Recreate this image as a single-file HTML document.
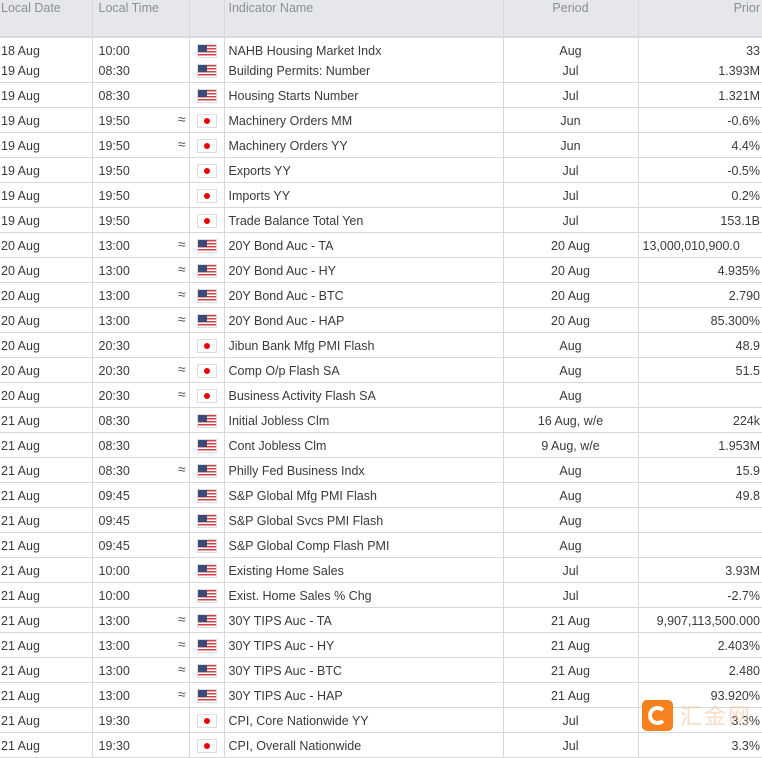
<!DOCTYPE html>
<html><head><meta charset="utf-8"><style>
*{margin:0;padding:0;box-sizing:border-box}
body{width:762px;height:755px;overflow:hidden;background:#fff;font-family:"Liberation Sans",Arial,sans-serif;font-size:12.5px;color:#3a3a3a;position:relative}
table{border-collapse:collapse;table-layout:fixed;width:762px;position:absolute;left:0;top:0}
th{background:#e5e7eb;color:#8a8e96;font-weight:normal;height:37px;vertical-align:top;padding-top:1px;text-align:left;border-left:1px solid #d6d8dc;border-bottom:2px solid #d6d8dc;font-size:12.5px}
td{height:25px;border-left:1px solid #d6d8dc;border-bottom:1px solid #d6d8dc;white-space:nowrap;overflow:hidden;padding-top:6px;vertical-align:top;line-height:14px}
th:first-child,td:first-child{border-left:none}
.c0{padding-left:1px}.c1{padding-left:6px;position:relative}.c3{padding-left:4px}.c4{text-align:center}.c5{text-align:right;padding-right:2px}
.ax{position:absolute;right:3px;top:4px;font-size:14px;color:#555}
.f{display:inline-block;width:20px;height:14px;border:1px solid #ddd;vertical-align:top;margin-left:7px;position:relative;background:#fff}
.us{background:repeating-linear-gradient(#c44 0 1.5px,#fff 1.5px 3px)}
.us::before{content:"";position:absolute;left:0;top:0;width:9px;height:7px;background:#3c4a78}
.jp::before{content:"";position:absolute;left:6px;top:3px;width:6px;height:6px;border-radius:50%;background:#e00}
tr.m td{height:22px;border-bottom:none;padding-top:6px}
tr.m2 td{height:23px;padding-top:5px}
</style></head><body>
<table>
<colgroup><col style="width:92px"><col style="width:97px"><col style="width:35px"><col style="width:279px"><col style="width:135px"><col style="width:124px"></colgroup>
<tr><th style="padding-left:1px">Local Date</th><th style="padding-left:6px">Local Time</th><th></th><th style="padding-left:4px">Indicator Name</th><th style="text-align:center">Period</th><th style="text-align:right;padding-right:2px">Prior</th></tr>
<tr class="m"><td class="c0">18 Aug</td><td class="c1">10:00</td><td><span class="f us"></span></td><td class="c3">NAHB Housing Market Indx</td><td class="c4">Aug</td><td class="c5">33</td></tr>
<tr class="m2"><td class="c0">19 Aug</td><td class="c1">08:30</td><td><span class="f us"></span></td><td class="c3">Building Permits: Number</td><td class="c4">Jul</td><td class="c5">1.393M</td></tr>
<tr><td class="c0">19 Aug</td><td class="c1">08:30</td><td><span class="f us"></span></td><td class="c3">Housing Starts Number</td><td class="c4">Jul</td><td class="c5">1.321M</td></tr>
<tr><td class="c0">19 Aug</td><td class="c1">19:50<span class="ax">≈</span></td><td><span class="f jp"></span></td><td class="c3">Machinery Orders MM</td><td class="c4">Jun</td><td class="c5">-0.6%</td></tr>
<tr><td class="c0">19 Aug</td><td class="c1">19:50<span class="ax">≈</span></td><td><span class="f jp"></span></td><td class="c3">Machinery Orders YY</td><td class="c4">Jun</td><td class="c5">4.4%</td></tr>
<tr><td class="c0">19 Aug</td><td class="c1">19:50</td><td><span class="f jp"></span></td><td class="c3">Exports YY</td><td class="c4">Jul</td><td class="c5">-0.5%</td></tr>
<tr><td class="c0">19 Aug</td><td class="c1">19:50</td><td><span class="f jp"></span></td><td class="c3">Imports YY</td><td class="c4">Jul</td><td class="c5">0.2%</td></tr>
<tr><td class="c0">19 Aug</td><td class="c1">19:50</td><td><span class="f jp"></span></td><td class="c3">Trade Balance Total Yen</td><td class="c4">Jul</td><td class="c5">153.1B</td></tr>
<tr><td class="c0">20 Aug</td><td class="c1">13:00<span class="ax">≈</span></td><td><span class="f us"></span></td><td class="c3">20Y Bond Auc - TA</td><td class="c4">20 Aug</td><td class="c5" style="text-align:left;padding-left:4px">13,000,010,900.0</td></tr>
<tr><td class="c0">20 Aug</td><td class="c1">13:00<span class="ax">≈</span></td><td><span class="f us"></span></td><td class="c3">20Y Bond Auc - HY</td><td class="c4">20 Aug</td><td class="c5">4.935%</td></tr>
<tr><td class="c0">20 Aug</td><td class="c1">13:00<span class="ax">≈</span></td><td><span class="f us"></span></td><td class="c3">20Y Bond Auc - BTC</td><td class="c4">20 Aug</td><td class="c5">2.790</td></tr>
<tr><td class="c0">20 Aug</td><td class="c1">13:00<span class="ax">≈</span></td><td><span class="f us"></span></td><td class="c3">20Y Bond Auc - HAP</td><td class="c4">20 Aug</td><td class="c5">85.300%</td></tr>
<tr><td class="c0">20 Aug</td><td class="c1">20:30</td><td><span class="f jp"></span></td><td class="c3">Jibun Bank Mfg PMI Flash</td><td class="c4">Aug</td><td class="c5">48.9</td></tr>
<tr><td class="c0">20 Aug</td><td class="c1">20:30<span class="ax">≈</span></td><td><span class="f jp"></span></td><td class="c3">Comp O/p Flash SA</td><td class="c4">Aug</td><td class="c5">51.5</td></tr>
<tr><td class="c0">20 Aug</td><td class="c1">20:30<span class="ax">≈</span></td><td><span class="f jp"></span></td><td class="c3">Business Activity Flash SA</td><td class="c4">Aug</td><td class="c5"></td></tr>
<tr><td class="c0">21 Aug</td><td class="c1">08:30</td><td><span class="f us"></span></td><td class="c3">Initial Jobless Clm</td><td class="c4">16 Aug, w/e</td><td class="c5">224k</td></tr>
<tr><td class="c0">21 Aug</td><td class="c1">08:30</td><td><span class="f us"></span></td><td class="c3">Cont Jobless Clm</td><td class="c4">9 Aug, w/e</td><td class="c5">1.953M</td></tr>
<tr><td class="c0">21 Aug</td><td class="c1">08:30<span class="ax">≈</span></td><td><span class="f us"></span></td><td class="c3">Philly Fed Business Indx</td><td class="c4">Aug</td><td class="c5">15.9</td></tr>
<tr><td class="c0">21 Aug</td><td class="c1">09:45</td><td><span class="f us"></span></td><td class="c3">S&amp;P Global Mfg PMI Flash</td><td class="c4">Aug</td><td class="c5">49.8</td></tr>
<tr><td class="c0">21 Aug</td><td class="c1">09:45</td><td><span class="f us"></span></td><td class="c3">S&amp;P Global Svcs PMI Flash</td><td class="c4">Aug</td><td class="c5"></td></tr>
<tr><td class="c0">21 Aug</td><td class="c1">09:45</td><td><span class="f us"></span></td><td class="c3">S&amp;P Global Comp Flash PMI</td><td class="c4">Aug</td><td class="c5"></td></tr>
<tr><td class="c0">21 Aug</td><td class="c1">10:00</td><td><span class="f us"></span></td><td class="c3">Existing Home Sales</td><td class="c4">Jul</td><td class="c5">3.93M</td></tr>
<tr><td class="c0">21 Aug</td><td class="c1">10:00</td><td><span class="f us"></span></td><td class="c3">Exist. Home Sales % Chg</td><td class="c4">Jul</td><td class="c5">-2.7%</td></tr>
<tr><td class="c0">21 Aug</td><td class="c1">13:00<span class="ax">≈</span></td><td><span class="f us"></span></td><td class="c3">30Y TIPS Auc - TA</td><td class="c4">21 Aug</td><td class="c5">9,907,113,500.000</td></tr>
<tr><td class="c0">21 Aug</td><td class="c1">13:00<span class="ax">≈</span></td><td><span class="f us"></span></td><td class="c3">30Y TIPS Auc - HY</td><td class="c4">21 Aug</td><td class="c5">2.403%</td></tr>
<tr><td class="c0">21 Aug</td><td class="c1">13:00<span class="ax">≈</span></td><td><span class="f us"></span></td><td class="c3">30Y TIPS Auc - BTC</td><td class="c4">21 Aug</td><td class="c5">2.480</td></tr>
<tr><td class="c0">21 Aug</td><td class="c1">13:00<span class="ax">≈</span></td><td><span class="f us"></span></td><td class="c3">30Y TIPS Auc - HAP</td><td class="c4">21 Aug</td><td class="c5">93.920%</td></tr>
<tr><td class="c0">21 Aug</td><td class="c1">19:30</td><td><span class="f jp"></span></td><td class="c3">CPI, Core Nationwide YY</td><td class="c4">Jul</td><td class="c5">3.3%</td></tr>
<tr><td class="c0">21 Aug</td><td class="c1">19:30</td><td><span class="f jp"></span></td><td class="c3">CPI, Overall Nationwide</td><td class="c4">Jul</td><td class="c5">3.3%</td></tr>
</table>
<div style="position:absolute;left:642px;top:700px;width:31px;height:31px;border-radius:5px;background:#f5821f"><div style="position:absolute;left:6px;top:6px;width:19px;height:19px;border-radius:50%;border:4px solid #fff;border-right-color:transparent"></div></div>
<div style="position:absolute;left:680px;top:699px;font-family:'Noto Sans CJK SC',sans-serif;font-size:22px;color:rgba(240,190,150,.55);letter-spacing:2px">汇金网</div>
</body></html>
